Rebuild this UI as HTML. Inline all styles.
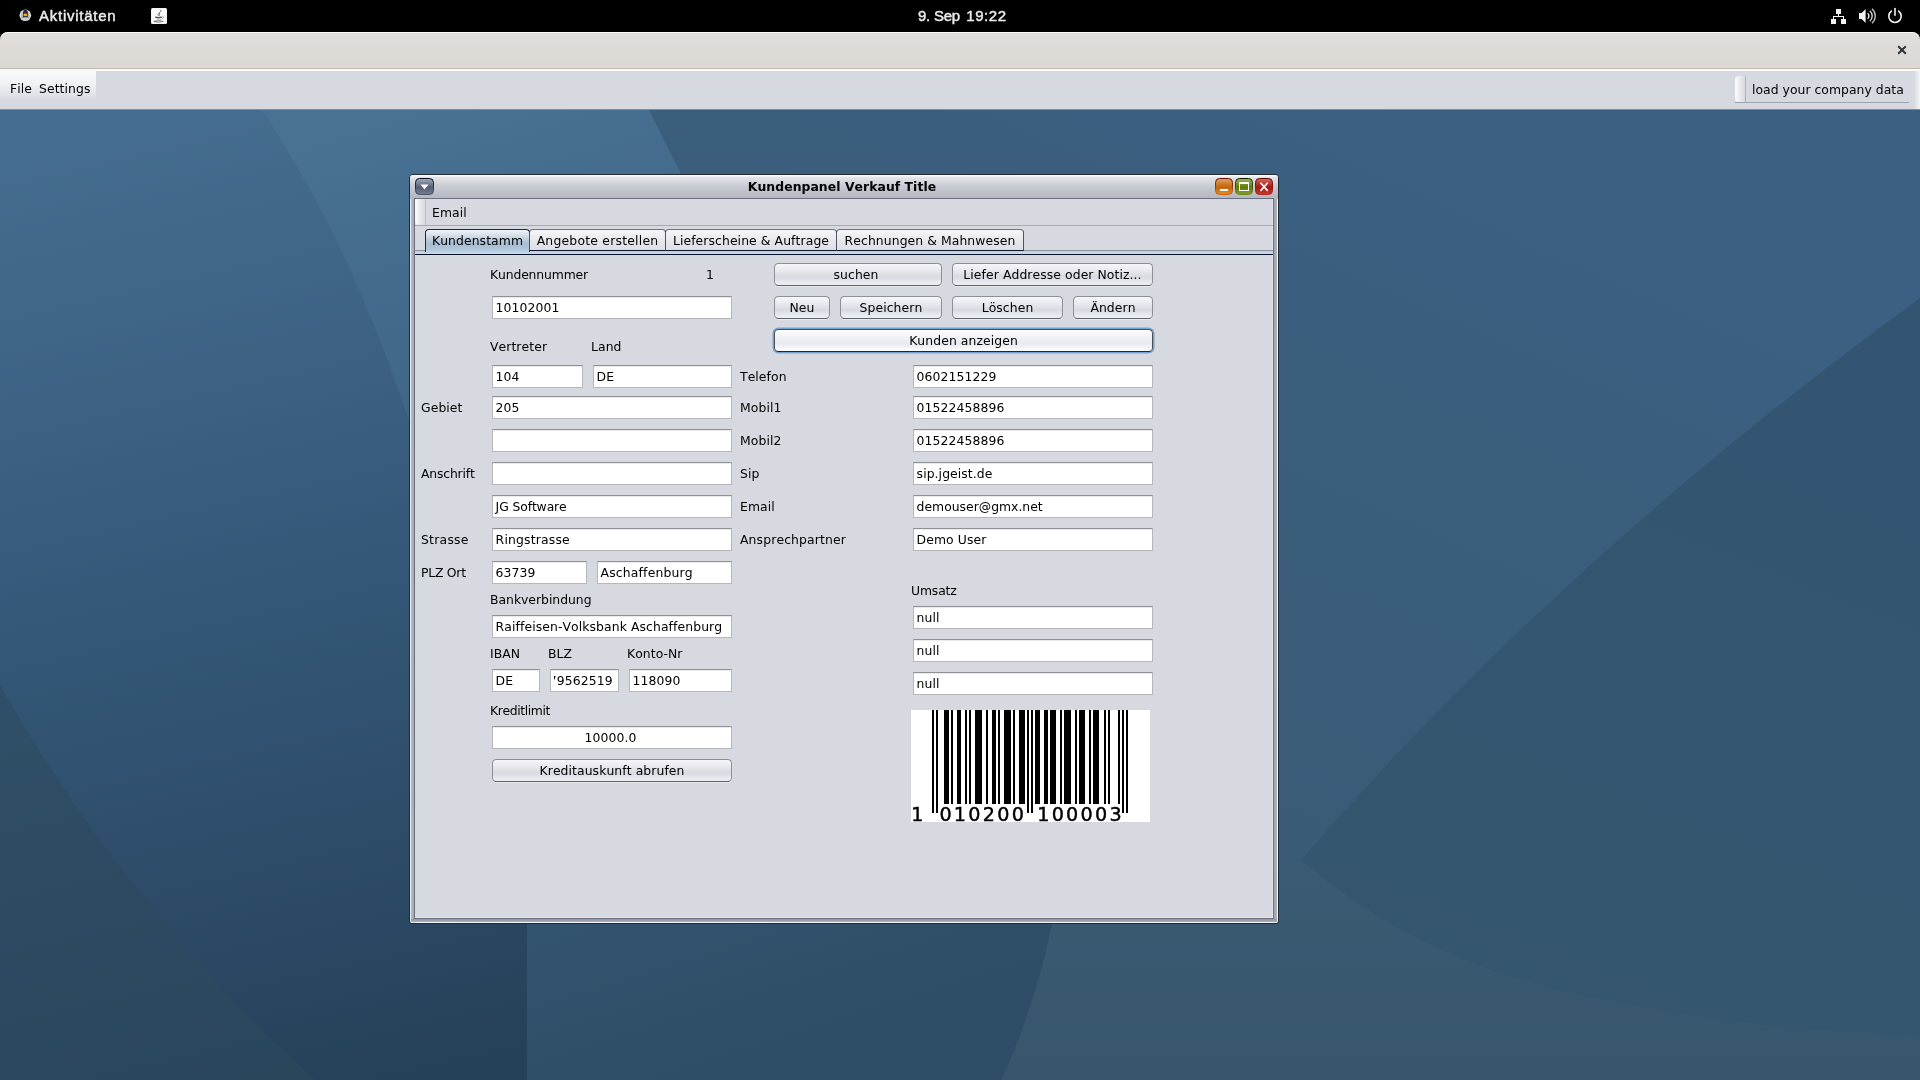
<!DOCTYPE html><html><head><meta charset="utf-8"><title>Kundenpanel Verkauf</title><style>
*{box-sizing:border-box;margin:0;padding:0}
html,body{width:1920px;height:1080px;overflow:hidden;background:#36556f}
body{position:relative;font-family:"DejaVu Sans","Liberation Sans",sans-serif;font-size:12.4px;color:#000;line-height:14px;font-kerning:none}
.abs{position:absolute}
#desk{position:absolute;left:0;top:0;width:1920px;height:1080px}
#topbar{position:absolute;left:0;top:0;width:1920px;height:42px;background:#000;color:#ececec}
#wtitle{position:absolute;left:0;top:32px;width:1920px;height:37px;border-radius:8px 8px 0 0;background:linear-gradient(#e2dfdb,#dbd8d4);box-shadow:inset 0 1px 0 #fbfbfa}
#wline{position:absolute;left:0;top:68px;width:1920px;height:1px;background:#c1b9b1}
#band{position:absolute;left:0;top:69px;width:1920px;height:41px;background:#d6d9df}
.lbl{position:absolute;white-space:nowrap;height:14px;line-height:14px}
.tf{position:absolute;height:23px;background:#fff;border:1px solid #b5b7bc;border-top-color:#8e9196;box-shadow:inset 0 1px 0 #ebebec;white-space:nowrap;overflow:hidden;padding-left:2.6px;line-height:14px;padding-top:3.6px}
.btn{position:absolute;height:23px;border-radius:4.5px;border:1px solid #8b8f96;border-bottom-color:#5d626a;background:linear-gradient(#f6f7f9 0%,#e6e8ed 35%,#d7dae1 62%,#e6e9ef 85%,#eef0f5 100%);text-align:center;white-space:nowrap;line-height:14px;padding-top:3.6px;box-shadow:0 1px 0 rgba(255,255,255,.45)}
.tab{position:absolute;top:229px;height:22px;border:1px solid #4a5566;border-top-color:#6b727d;border-bottom-color:#10162a;border-radius:4px 4px 0 0;background:linear-gradient(#f5f6f8,#e4e6eb 60%,#dcdfe5);white-space:nowrap;text-align:center;padding-top:3.6px;line-height:14px}
.tab.sel{border-color:#1c2b3e;border-bottom:none;height:23px;background:linear-gradient(#f0f3f7 0%,#cfdae6 30%,#a7bbd1 62%,#b3c8dc 90%,#bcd2e6 100%)}
</style></head><body>
<svg id="desk" viewBox="0 0 1920 1080">
<defs>
<linearGradient id="gA" gradientUnits="userSpaceOnUse" x1="200" y1="110" x2="420" y2="1080"><stop offset="0" stop-color="#456d91"/><stop offset="0.45" stop-color="#36597a"/><stop offset="1" stop-color="#254159"/></linearGradient>
<linearGradient id="gB" gradientUnits="userSpaceOnUse" x1="400" y1="110" x2="700" y2="1080"><stop offset="0" stop-color="#487194"/><stop offset="0.5" stop-color="#3b5e7e"/><stop offset="1" stop-color="#2e4d66"/></linearGradient>
<linearGradient id="gC" gradientUnits="userSpaceOnUse" x1="1500" y1="110" x2="1100" y2="1000"><stop offset="0" stop-color="#3c6083"/><stop offset="1" stop-color="#395a72"/></linearGradient>
<linearGradient id="gD" gradientUnits="userSpaceOnUse" x1="1800" y1="300" x2="1500" y2="1080"><stop offset="0" stop-color="#335572"/><stop offset="1" stop-color="#35566d"/></linearGradient>
<linearGradient id="gE" gradientUnits="userSpaceOnUse" x1="0" y1="860" x2="0" y2="1080"><stop offset="0" stop-color="#3a5b73"/><stop offset="1" stop-color="#37566e"/></linearGradient>
</defs>
<rect width="1920" height="1080" fill="url(#gC)"/>
<path d="M0 100 H644 L681 174 Q720 260 760 420 Q860 760 1052 925 Q1036 1003 1002 1080 H0Z" fill="url(#gB)"/>
<path d="M0 100 H255 Q345 230 409 420 Q500 700 527 925 V1080 H0Z" fill="url(#gA)"/>
<path d="M0 685 Q120 900 315 1080 H0Z" fill="#2b4a5b" opacity="0.5"/>
<path d="M1920 298 Q1560 560 1301 860 Q1420 965 1600 1000 T1920 1035Z" fill="url(#gD)"/>
<path d="M1301 860 Q1420 965 1600 1000 T1920 1035 V1080 H1002 Q1036 1003 1052 925 Z" fill="url(#gE)"/>

</svg>
<div id="ui" style="position:absolute;left:0;top:0;width:1920px;height:1080px;will-change:transform">
<div id="topbar">
<div class="abs" style="left:39px;top:7.4px;font:15px 'Liberation Sans',sans-serif;line-height:18px;letter-spacing:0.75px;-webkit-text-stroke:0.45px #ececec">Aktivitäten</div>
<div class="abs" style="left:918px;white-space:pre;top:7.4px;font:15px 'Liberation Sans',sans-serif;line-height:18px;letter-spacing:-0.25px;-webkit-text-stroke:0.45px #ececec">9. Sep <span style="letter-spacing:0.6px;margin-left:2.4px">19:22</span></div>
<svg class="abs" style="left:0;top:0" width="1920" height="32" viewBox="0 0 1920 32">
<circle cx="25.3" cy="15.3" r="5.8" fill="#dcdcdc"/><circle cx="25.3" cy="15.3" r="4.4" fill="#b9b9b9"/>
<path d="M23 12.2 a2.4 2.4 0 0 1 4.8 0 v5 h-4.8z" fill="#2b2b2b"/><ellipse cx="25.3" cy="14.9" rx="1.9" ry="1.3" fill="#f7a81b"/><path d="M22 18 q3.3 -2 6.6 0 v1.6 h-6.6z" fill="#cfcfcf"/><path d="M21.6 17.4 h7.4" stroke="#b5453c" stroke-width="0.7" opacity="0.8"/>
<rect x="151" y="8" width="16" height="16" rx="1.5" fill="#f3f3f3"/><rect x="152" y="9" width="14" height="14" rx="1" fill="#fafafa"/>
<g fill="none" stroke="#666" stroke-width="0.8" stroke-linecap="round"><path d="M160.4 9.8 q1.7 1.4 -0.9 2.9 q-2.4 1.5 -1.2 3.1" stroke-dasharray="1.4 0.5"/><path d="M159.5 12.6 v3" stroke-width="0.7"/><path d="M155.8 17.3 q2.6 0.9 5.4 0" stroke-width="1.5" stroke="#555"/><path d="M162.6 16.3 q1.9 0.5 0.5 1.9 l-0.9 0.6" stroke-width="0.7" stroke="#888"/><path d="M157.2 20.1 q2 0.5 3.8 0" stroke-width="0.9"/><path d="M154.2 21.3 q1.2 -0.6 2.2 -0.2 M154.2 21.5 q4.6 1.3 8.8 0" stroke-width="0.9"/></g>
<g fill="#f2f2f2"><rect x="1836" y="9" width="5" height="5"/><rect x="1831" y="19" width="5" height="5"/><rect x="1841" y="19" width="5" height="5"/><rect x="1838" y="14" width="1" height="3"/><rect x="1833" y="16" width="11" height="1"/><rect x="1833" y="16" width="1" height="3"/><rect x="1843" y="16" width="1" height="3"/></g>
<path d="M1859 13 h2.6 l4 -4 v14 l-4 -4 h-2.6z" fill="#f2f2f2"/>
<g fill="none" stroke="#f2f2f2" stroke-width="1.3"><path d="M1867.6 13.2 a3.6 3.6 0 0 1 0 5.6"/><path d="M1869.8 10.8 a6.8 6.8 0 0 1 0 10.4" opacity="0.9"/><path d="M1872 8.8 a9.6 9.6 0 0 1 0 14.4" opacity="0.8"/></g>
<g fill="none" stroke="#f2f2f2" stroke-width="1.6" stroke-linecap="round"><path d="M1891.4 11.2 a6.2 6.2 0 1 0 7.2 0"/><path d="M1895 8.6 v6.6"/></g>
</svg>
</div>
<div id="wtitle"></div><div id="wline"></div><div id="band"></div>
<div class="abs" style="left:0;top:70px;width:96px;height:29px;background:linear-gradient(#fbfbfc,#f1f2f5 45%,#d9dce3 100%)"></div>
<div class="lbl" style="left:10px;top:82px;letter-spacing:0.080px;">File</div>
<div class="lbl" style="left:39px;top:82px;letter-spacing:0.080px;">Settings</div>
<div class="abs" id="iframe" style="left:409px;top:174px;width:870px;height:750px;background:linear-gradient(90deg,#e9ebee 0,#e9ebee 1px,#b9bdc8 1px,#a2a7b3 4px,#a2a7b3 864px,#adb1bd 867px,#f4f5f7 867px);border:1px solid #242a33;border-radius:4px 4px 3px 3px"></div>
<div class="abs" style="left:411px;top:919px;width:866px;height:4px;background:linear-gradient(#8d93a0,#adb1bd 74%,#f4f5f7 75%)"></div>
<div class="abs" style="left:410px;top:175px;width:868px;height:24px;border-radius:3px 3px 0 0;background:linear-gradient(#fafbfc 0,#fafbfc 1px,#e4e6ea 2px,#c9ccd4 45%,#b1b5c0 100%)"></div>
<div class="abs" style="left:414px;top:198px;width:860px;height:721px;background:#d6d9df;border:1px solid #6a7080;box-shadow:inset -1px -1px 0 #e3e5ea"></div>
<div class="lbl" style="left:640px;width:404px;text-align:center;top:180px;font-weight:bold;letter-spacing:0.06px">Kundenpanel Verkauf Title</div>
<svg class="abs" style="left:410px;top:175px" width="868" height="24" viewBox="410 175 868 24">
<defs>
<linearGradient id="tm" x1="0" y1="0" x2="0" y2="1"><stop offset="0" stop-color="#a4acba"/><stop offset="0.55" stop-color="#566074"/><stop offset="1" stop-color="#727d90"/></linearGradient>
<linearGradient id="tmb" x1="0" y1="0" x2="0" y2="1"><stop offset="0" stop-color="#05061a"/><stop offset="1" stop-color="#4d576a"/></linearGradient>
<linearGradient id="to" x1="0" y1="0" x2="0" y2="1"><stop offset="0" stop-color="#dba567"/><stop offset="0.55" stop-color="#c4640a"/><stop offset="1" stop-color="#e28c2c"/></linearGradient>
<linearGradient id="tob" x1="0" y1="0" x2="0" y2="1"><stop offset="0" stop-color="#6e0a00"/><stop offset="1" stop-color="#c8690f"/></linearGradient>
<linearGradient id="tg" x1="0" y1="0" x2="0" y2="1"><stop offset="0" stop-color="#a3b45c"/><stop offset="0.55" stop-color="#5f7b06"/><stop offset="1" stop-color="#8a9c2f"/></linearGradient>
<linearGradient id="tgb" x1="0" y1="0" x2="0" y2="1"><stop offset="0" stop-color="#0a1f00"/><stop offset="1" stop-color="#71891b"/></linearGradient>
<linearGradient id="tr" x1="0" y1="0" x2="0" y2="1"><stop offset="0" stop-color="#cf6a5e"/><stop offset="0.55" stop-color="#a9170d"/><stop offset="1" stop-color="#c43a2e"/></linearGradient>
<linearGradient id="trb" x1="0" y1="0" x2="0" y2="1"><stop offset="0" stop-color="#5e0500"/><stop offset="1" stop-color="#b02a20"/></linearGradient>
</defs>
<rect x="415.5" y="178.5" width="18" height="16" rx="4" fill="url(#tm)" stroke="url(#tmb)"/>
<path d="M420.5 184.5 h8 l-4 5z" fill="#fff"/>
<rect x="1215.5" y="178.5" width="17" height="16" rx="4" fill="url(#to)" stroke="url(#tob)"/>
<rect x="1220" y="189" width="8" height="2" fill="#fff"/>
<rect x="1235.5" y="178.5" width="17" height="16" rx="4" fill="url(#tg)" stroke="url(#tgb)"/>
<path d="M1239 182 h10 v9 h-10z M1240 184 v6 h8 v-6z" fill="#fff" fill-rule="evenodd"/>
<rect x="1255.5" y="178.5" width="17" height="16" rx="4" fill="url(#tr)" stroke="url(#trb)"/>
<path d="M1260.5 182.7 L1267.7 190.9 M1267.7 182.7 L1260.5 190.9" stroke="#fff" stroke-width="1.7" fill="none"/>
</svg>
<div class="abs" style="left:415px;top:225px;width:858px;height:1px;background:#a5a9b0"></div>
<div class="abs" style="left:415px;top:199px;width:10px;height:26px;border-radius:0 0 0 4px;background:linear-gradient(90deg,#fdfdfd,#e3e5e9 60%,#d6d9df)"></div>
<div class="abs" style="left:425px;top:199px;width:1px;height:26px;background:#bfc2c9"></div>
<div class="lbl" style="left:432px;top:206px;letter-spacing:0.080px;">Email</div>
<div class="abs" style="left:415px;top:250px;width:858px;height:1px;background:#8d929c"></div>
<div class="abs" style="left:415px;top:251px;width:858px;height:3px;background:linear-gradient(#b7cfe4,#c6dcf1)"></div>
<div class="abs" style="left:415px;top:254px;width:858px;height:1px;background:#0b1024"></div>
<div class="tab sel" style="left:425px;width:105px;letter-spacing:0.080px">Kundenstamm</div>
<div class="tab" style="left:529px;width:137px;letter-spacing:0.220px">Angebote erstellen</div>
<div class="tab" style="left:665px;width:172px;letter-spacing:0.090px">Lieferscheine &amp; Auftrage</div>
<div class="tab" style="left:836px;width:188px;letter-spacing:0.080px">Rechnungen &amp; Mahnwesen</div>
<div class="lbl" style="left:490px;top:268px;letter-spacing:-0.140px;">Kundennummer</div>
<div class="lbl" style="left:706px;top:268px;letter-spacing:0.113px;">1</div>
<div class="tf" style="left:492px;top:296px;width:240px;letter-spacing:0.113px;">10102001</div>
<div class="lbl" style="left:490px;top:340px;letter-spacing:0.080px;">Vertreter</div>
<div class="lbl" style="left:591px;top:340px;letter-spacing:0.080px;">Land</div>
<div class="tf" style="left:492px;top:365px;width:91px;letter-spacing:0.113px;">104</div>
<div class="tf" style="left:593px;top:365px;width:139px;letter-spacing:0.080px;">DE</div>
<div class="lbl" style="left:421px;top:401px;letter-spacing:0.080px;">Gebiet</div>
<div class="tf" style="left:492px;top:396px;width:240px;letter-spacing:0.113px;">205</div>
<div class="tf" style="left:492px;top:429px;width:240px;letter-spacing:0.080px;"></div>
<div class="lbl" style="left:421px;top:467px;letter-spacing:-0.170px;">Anschrift</div>
<div class="tf" style="left:492px;top:462px;width:240px;letter-spacing:0.080px;"></div>
<div class="tf" style="left:492px;top:495px;width:240px;letter-spacing:-0.120px;">JG Software</div>
<div class="lbl" style="left:421px;top:533px;letter-spacing:0.250px;">Strasse</div>
<div class="tf" style="left:492px;top:528px;width:240px;letter-spacing:0.180px;">Ringstrasse</div>
<div class="lbl" style="left:421px;top:566px;letter-spacing:-0.250px;">PLZ Ort</div>
<div class="tf" style="left:492px;top:561px;width:95px;letter-spacing:0.113px;">63739</div>
<div class="tf" style="left:597px;top:561px;width:135px;letter-spacing:0.160px;">Aschaffenburg</div>
<div class="lbl" style="left:490px;top:593px;letter-spacing:-0.020px;">Bankverbindung</div>
<div class="tf" style="left:492px;top:615px;width:240px;letter-spacing:0.094px;">Raiffeisen-Volksbank Aschaffenburg</div>
<div class="lbl" style="left:490px;top:647px;letter-spacing:0.080px;">IBAN</div>
<div class="lbl" style="left:548px;top:647px;letter-spacing:0.080px;">BLZ</div>
<div class="lbl" style="left:627px;top:647px;letter-spacing:0.080px;">Konto-Nr</div>
<div class="tf" style="left:492px;top:669px;width:48px;letter-spacing:0.080px;">DE</div>
<div class="tf" style="left:550px;top:669px;width:69px;letter-spacing:0.113px"><span style="display:block;overflow:hidden;text-indent:-4.8px">79562519</span></div>
<div class="tf" style="left:629px;top:669px;width:103px;letter-spacing:0.113px;">118090</div>
<div class="lbl" style="left:490px;top:704px;letter-spacing:-0.390px;">Kreditlimit</div>
<div class="tf" style="left:492px;top:726px;width:240px;letter-spacing:0.113px;text-align:center;padding-left:0;padding-right:3px">10000.0</div>
<div class="btn" style="left:492px;top:759px;width:240px;letter-spacing:0.080px;">Kreditauskunft abrufen</div>
<div class="btn" style="left:774px;top:263px;width:168px;letter-spacing:0.080px;padding-right:4px">suchen</div>
<div class="btn" style="left:952px;top:263px;width:201px;letter-spacing:0.080px;">Liefer Addresse oder Notiz...</div>
<div class="btn" style="left:774px;top:296px;width:56px;letter-spacing:0.080px;">Neu</div>
<div class="btn" style="left:840px;top:296px;width:102px;letter-spacing:0.080px;">Speichern</div>
<div class="btn" style="left:952px;top:296px;width:111px;letter-spacing:0.080px;">Löschen</div>
<div class="btn" style="left:1073px;top:296px;width:80px;letter-spacing:0.080px;">Ändern</div>
<div class="btn" style="left:774px;top:329px;width:379px;letter-spacing:0.080px;background:linear-gradient(#ffffff 0%,#f1f2f6 35%,#e8eaf0 62%,#f4f5f8 85%,#fff 100%);border-color:#4a4f58;border-bottom-color:#23262b;box-shadow:0 0 0 1.5px #73a4d1">Kunden anzeigen</div>
<div class="lbl" style="left:740px;top:370px;letter-spacing:0.080px;">Telefon</div>
<div class="tf" style="left:913px;top:365px;width:240px;letter-spacing:0.113px;">0602151229</div>
<div class="lbl" style="left:740px;top:401px;letter-spacing:0.080px;">Mobil1</div>
<div class="tf" style="left:913px;top:396px;width:240px;letter-spacing:0.113px;">01522458896</div>
<div class="lbl" style="left:740px;top:434px;letter-spacing:0.080px;">Mobil2</div>
<div class="tf" style="left:913px;top:429px;width:240px;letter-spacing:0.113px;">01522458896</div>
<div class="lbl" style="left:740px;top:467px;letter-spacing:0.080px;">Sip</div>
<div class="tf" style="left:913px;top:462px;width:240px;letter-spacing:0.080px;">sip.jgeist.de</div>
<div class="lbl" style="left:740px;top:500px;letter-spacing:0.080px;">Email</div>
<div class="tf" style="left:913px;top:495px;width:240px;">demouser@gmx.net</div>
<div class="lbl" style="left:740px;top:533px;letter-spacing:0.135px;">Ansprechpartner</div>
<div class="tf" style="left:913px;top:528px;width:240px;letter-spacing:0.080px;">Demo User</div>
<div class="lbl" style="left:911px;top:584px;letter-spacing:-0.150px;">Umsatz</div>
<div class="tf" style="left:913px;top:606px;width:240px;letter-spacing:0.080px;">null</div>
<div class="tf" style="left:913px;top:639px;width:240px;letter-spacing:0.080px;">null</div>
<div class="tf" style="left:913px;top:672px;width:240px;letter-spacing:0.080px;">null</div>
<svg class="abs" style="left:911px;top:710px" width="240" height="113" viewBox="911 710 240 113"><rect x="911" y="710" width="239" height="112" fill="#fff"/><g fill="#000" shape-rendering="crispEdges"><rect x="932" y="710" width="2" height="103"/><rect x="936" y="710" width="2" height="103"/><rect x="944" y="710" width="5" height="94"/><rect x="951" y="710" width="2" height="94"/><rect x="957" y="710" width="4" height="94"/><rect x="965" y="710" width="2" height="94"/><rect x="969" y="710" width="2" height="94"/><rect x="975" y="710" width="7" height="94"/><rect x="986" y="710" width="2" height="94"/><rect x="992" y="710" width="4" height="94"/><rect x="998" y="710" width="2" height="94"/><rect x="1004" y="710" width="7" height="94"/><rect x="1013" y="710" width="2" height="94"/><rect x="1019" y="710" width="6" height="94"/><rect x="1027" y="710" width="2" height="103"/><rect x="1031" y="710" width="2" height="103"/><rect x="1035" y="710" width="5" height="94"/><rect x="1044" y="710" width="4" height="94"/><rect x="1050" y="710" width="6" height="94"/><rect x="1060" y="710" width="2" height="94"/><rect x="1064" y="710" width="7" height="94"/><rect x="1075" y="710" width="2" height="94"/><rect x="1079" y="710" width="6" height="94"/><rect x="1089" y="710" width="2" height="94"/><rect x="1093" y="710" width="6" height="94"/><rect x="1104" y="710" width="2" height="94"/><rect x="1108" y="710" width="2" height="94"/><rect x="1118" y="710" width="2" height="94"/><rect x="1122" y="710" width="2" height="103"/><rect x="1126" y="710" width="2" height="103"/></g><g font-family="'DejaVu Sans',sans-serif" font-size="19.2" fill="#000" stroke="#000" stroke-width="0.45"><text x="911.3" y="820.8">1</text><text x="939.4" y="820.8" letter-spacing="2.26">010200</text><text x="1037.2" y="820.8" letter-spacing="2.26">100003</text></g></svg>
<div class="abs" style="left:1735px;top:76px;width:10px;height:26px;border-radius:4px 0 0 4px;background:linear-gradient(90deg,#fdfdfd,#e3e5e9 60%,#d6d9df)"></div>
<div class="abs" style="left:1745px;top:76px;width:1px;height:26px;background:#b0b4bc"></div>
<div class="abs" style="left:1735px;top:102px;width:174px;height:1px;background:#9ea2ab"></div>
<div class="abs" style="left:1914px;top:70px;width:6px;height:39px;background:linear-gradient(90deg,#d6d9df,#f4f5f7)"></div>
<div class="abs" style="left:0;top:109px;width:1920px;height:1px;background:#808b9b"></div>
<div class="abs" style="left:0;top:69px;width:1920px;height:2px;background:linear-gradient(#fbfbfb,#f6f7f8)"></div>
<div class="lbl" style="left:1752px;top:83px;letter-spacing:0.030px;">load your company data</div>
<svg class="abs" style="left:1894px;top:42px" width="16" height="16" viewBox="0 0 16 16"><path d="M4.2 4.2 L11.8 11.8 M11.8 4.2 L4.2 11.8" stroke="#2e3436" stroke-width="2" fill="none"/></svg>
</div>
</body></html>
